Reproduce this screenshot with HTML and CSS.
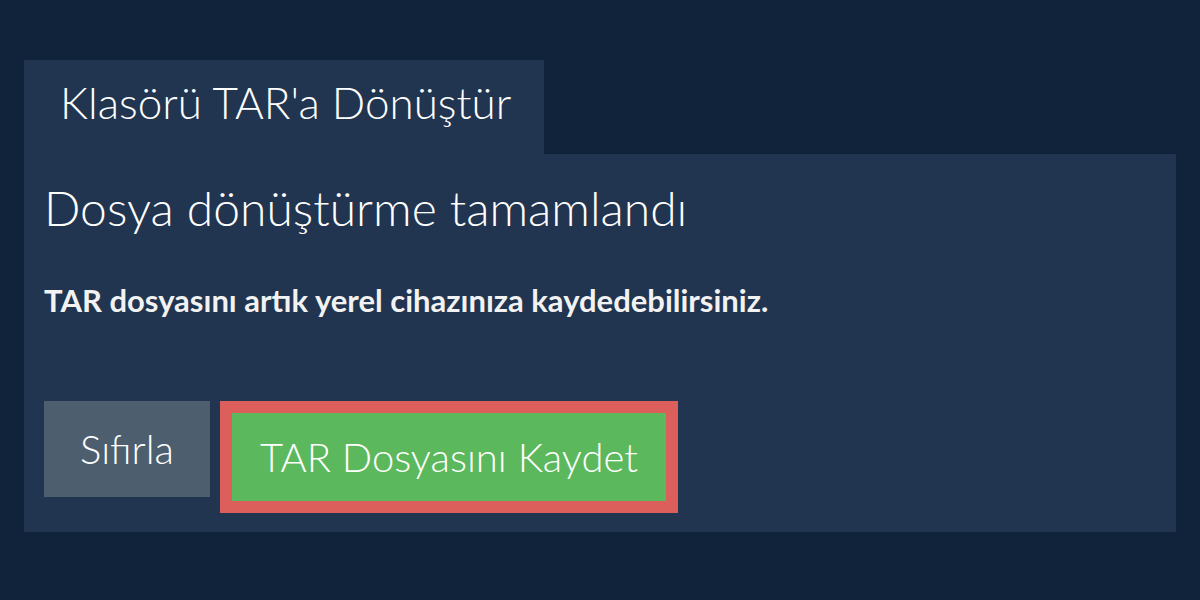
FILE: index.html
```html
<!DOCTYPE html>
<html lang="tr">
<head>
<meta charset="utf-8">
<link rel="stylesheet" href="styles.css">
</head>
<body>
<div class="wrap">
  <div class="tab">Klasörü TAR'a Dönüştür</div>
  <div class="panel">
    <h1 class="title">Dosya dönüştürme tamamlandı</h1>
    <p class="msg">TAR dosyasını artık yerel cihazınıza kaydedebilirsiniz.</p>
    <div class="actions">
      <button class="btn reset">Sıfırla</button>
      <button class="btn save">TAR Dosyasını Kaydet</button>
    </div>
  </div>
</div>
</body>
</html>
```
FILE: styles.css
```css
html, body {
  margin: 0;
  padding: 0;
  background: #11233a;
  width: 1200px;
  height: 600px;
  overflow: hidden;
  font-family: Lato, "Open Sans", sans-serif;
  color: #ffffff;
}
.wrap {
  padding: 60px 24px 0 24px;
}
.tab {
  display: inline-block;
  background: #213550;
  width: 520px;
  height: 94px;
  box-sizing: border-box;
  padding: 14px 0 0 36px;
  font-size: 44px;
  font-weight: 300;
  line-height: 56px;
}
.panel {
  background: #213550;
  height: 378px;
  box-sizing: border-box;
  padding: 24px 20px 0 20px;
}
.title {
  margin: 0;
  font-size: 48px;
  font-weight: 300;
  line-height: 60px;
}
.msg {
  margin: 42px 0 0 0;
  font-size: 31px;
  font-weight: 700;
  line-height: 40px;
  color: #f2f2f2;
}
.actions {
  display: flex;
  align-items: flex-start;
  gap: 10px;
  margin-top: 81px;
}
.btn {
  font-family: inherit;
  color: #fff;
  border: 0;
  margin: 0;
  font-weight: 300;
  font-size: 40px;
  cursor: pointer;
}
.reset {
  background: #4d5e6f;
  width: 166px;
  height: 96px;
  padding: 0;
  line-height: 96px;
}
.save {
  background: #5cb85c;
  border: 12px solid #dc5f5c;
  width: 458px;
  height: 112px;
  box-sizing: border-box;
  padding: 0;
}
```
